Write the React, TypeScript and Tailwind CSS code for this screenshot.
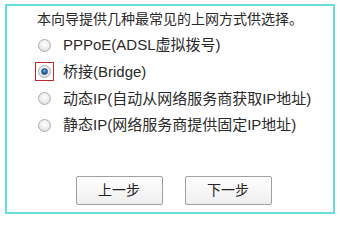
import React, { useState } from "react";

const options = [
  "PPPoE(ADSL虚拟拨号)",
  "桥接(Bridge)",
  "动态IP(自动从网络服务商获取IP地址)",
  "静态IP(网络服务商提供固定IP地址)",
];

function Radio({ checked }: { checked: boolean }) {
  return (
    <span className="flex h-[13px] w-[13px] items-center justify-center rounded-full border border-[#b0b0b0] bg-[radial-gradient(circle_at_50%_40%,#ffffff_0%,#ebebeb_55%,#cdcdcd_100%)]">
      {checked && (
        <span className="h-[7px] w-[7px] rounded-full border border-[#1d4f86] bg-[radial-gradient(circle_at_50%_35%,#7fb0e0_0%,#2c6cb0_50%,#12406f_100%)]" />
      )}
    </span>
  );
}

export default function App() {
  const [sel, setSel] = useState(1);
  return (
    <div className="h-[218px] w-[340px] bg-white pl-[5px] pr-[5px] pt-[4px] pb-[4px] [font-family:'Liberation_Sans','Noto_Sans_CJK_SC',sans-serif]">
      <div className="flex h-[210px] flex-col border-2 border-[#66dede] bg-white">
        <div className="pt-[4px] text-center text-[14px] leading-[18px] text-[#2a2a2a]">
          本向导提供几种最常见的上网方式供选择。
        </div>
        <div className="flex flex-col pl-[28px] pt-[8px] gap-[8.8px]">
          {options.map((o, i) => (
            <div
              key={o}
              className="flex h-[18px] items-center text-[15px] text-[#2a2a2a]"
              onClick={() => setSel(i)}
            >
              <span
                className={
                  "flex h-[19px] w-[19px] items-center justify-center border " +
                  (sel === i ? "border-[#c0282d]" : "border-transparent")
                }
              >
                <Radio checked={sel === i} />
              </span>
              <span className="ml-[9px] leading-[18px]">{o}</span>
            </div>
          ))}
        </div>
        <div className="flex flex-1 items-end justify-center gap-[22px] pb-[7px] pl-[7px]">
          <button className="h-[29px] w-[87px] rounded-[2px] border border-[#a0a0a0] bg-gradient-to-b from-[#ffffff] to-[#eeeeee] text-[14px] text-[#222]">
            上一步
          </button>
          <button className="h-[29px] w-[87px] rounded-[2px] border border-[#a0a0a0] bg-gradient-to-b from-[#ffffff] to-[#eeeeee] text-[14px] text-[#222]">
            下一步
          </button>
        </div>
      </div>
    </div>
  );
}
